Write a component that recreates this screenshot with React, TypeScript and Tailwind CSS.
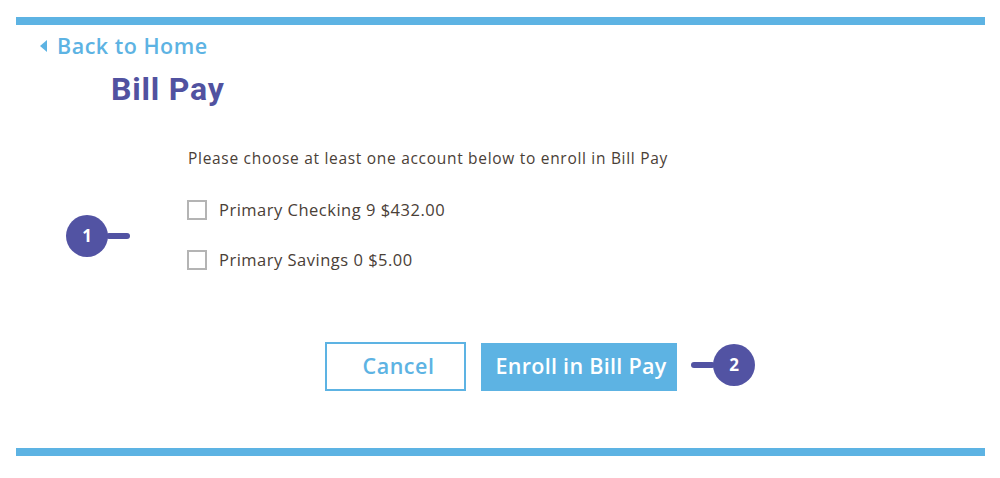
import React from "react";

const accounts = [
  { id: "chk", label: "Primary Checking 9 $432.00" },
  { id: "sav", label: "Primary Savings 0 $5.00" },
];

const Marker: React.FC<{ n: number; side: "left" | "right" }> = ({ n, side }) => {
  const dot = (
    <div className="w-[42px] h-[42px] rounded-full bg-[#5253a3] text-white flex items-center justify-center text-[17px] font-bold font-['Open_Sans',sans-serif]">
      {n}
    </div>
  );
  const line = <div className="w-[24px] h-[6px] rounded-full bg-[#5253a3] -mx-[2px]" />;
  return (
    <div className="flex items-center">
      {side === "right" ? (
        <>
          {dot}
          {line}
        </>
      ) : (
        <>
          {line}
          {dot}
        </>
      )}
    </div>
  );
};

export default function App() {
  return (
    <div className="w-[1000px] h-[478px] bg-white px-4 pt-[17px] font-['Open_Sans',sans-serif]">
      <div className="w-[969px] h-2 bg-[#5db3e3]" />

      <a className="mt-[8px] h-[26px] flex items-center pl-[24px] gap-[10px] text-[#5db3e3] text-[21.5px] tracking-[0.5px] font-semibold">
        <span className="w-0 h-0 border-y-[6px] border-y-transparent border-r-[7px] border-r-[#5db3e3]" />
        <span>Back to Home</span>
      </a>

      <h1 className="mt-[10px] h-[40px] leading-[40px] pl-[95px] text-[#5152a0] text-[32px] tracking-[0.8px] font-bold font-['Roboto','Noto_Sans',sans-serif]">
        Bill Pay
      </h1>

      <div className="relative">
        <p className="mt-[39px] h-[20px] leading-[20px] pl-[172px] text-[15.5px] tracking-[0.7px] text-[#4a4037]">
          Please choose at least one account below to enroll in Bill Pay
        </p>
        <div className="mt-[32px] flex flex-col gap-[30px] pl-[171px]">
          {accounts.map((a) => (
            <label key={a.id} className="flex items-center gap-[12px] h-[20px]">
              <span className="w-[20px] h-[20px] border-2 border-[#b4b4b4] bg-white" />
              <span className="text-[16.5px] tracking-[0.5px] text-[#4a4037]">{a.label}</span>
            </label>
          ))}
        </div>
        <div className="absolute left-[50px] top-[67px]">
          <Marker n={1} side="right" />
        </div>
      </div>

      <div className="mt-[72px] flex items-center pl-[309px]">
        <button className="w-[141px] h-[49px] border-2 border-[#5db3e3] text-[#5db3e3] text-[21.5px] tracking-[0.5px] font-semibold pl-[6px]">
          Cancel
        </button>
        <button className="ml-[15px] w-[196px] h-[48px] bg-[#5db3e3] text-white text-[21.5px] tracking-[0.3px] font-semibold pl-[4px]">
          Enroll in Bill Pay
        </button>
        <div className="ml-[16px] -mt-[4px]">
          <Marker n={2} side="left" />
        </div>
      </div>

      <div className="mt-[57px] w-[969px] h-2 bg-[#5db3e3]" />
    </div>
  );
}
